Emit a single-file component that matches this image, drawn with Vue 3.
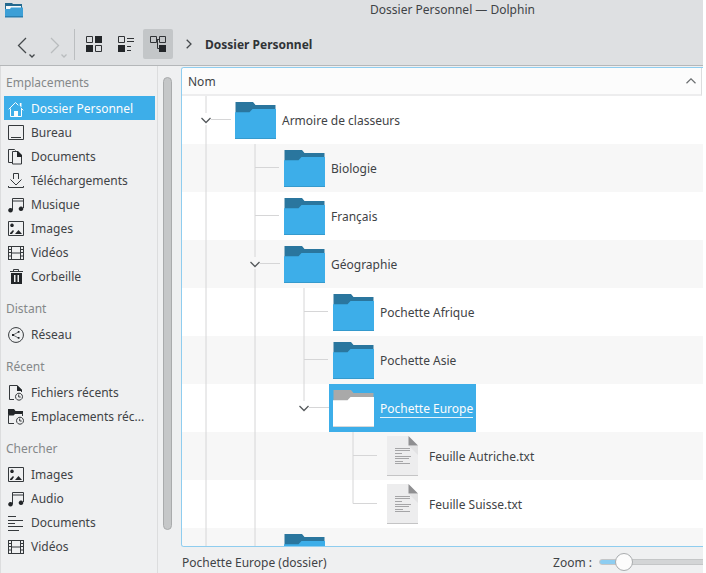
<script setup>
import { ref, computed } from 'vue'

const groups = [
  {
    title: 'Emplacements',
    items: [
      { label: 'Dossier Personnel', icon: 'home', active: true },
      { label: 'Bureau', icon: 'desktop' },
      { label: 'Documents', icon: 'documents' },
      { label: 'Téléchargements', icon: 'download' },
      { label: 'Musique', icon: 'music' },
      { label: 'Images', icon: 'image' },
      { label: 'Vidéos', icon: 'video' },
      { label: 'Corbeille', icon: 'trash' },
    ],
  },
  { title: 'Distant', items: [{ label: 'Réseau', icon: 'network' }] },
  {
    title: 'Récent',
    items: [
      { label: 'Fichiers récents', icon: 'recentFile' },
      { label: 'Emplacements réc...', icon: 'recentFolder' },
    ],
  },
  {
    title: 'Chercher',
    items: [
      { label: 'Images', icon: 'image' },
      { label: 'Audio', icon: 'music' },
      { label: 'Documents', icon: 'lines' },
      { label: 'Vidéos', icon: 'video' },
    ],
  },
]

// Each icon is a list of shapes: s = stroked path, f = filled path, t = thin stroke.
const icons = {
  home: [
    { s: 'M.7 8.300 7.500 1.500l2.800 2.800M12.800 6.800l2.500 2.500M2.500 7.500v8h11v-8' },
    { f: 'M6 10h4v5.500H6zM11.800 2h1.700v4.500l-1.700-1.700z' },
  ],
  desktop: [{ s: 'M.5.5h15v14H.5zM3 12.500h10' }],
  documents: [
    { s: 'M4 13.500H.5V.5h6l1 1M4.500 2.500h5l4 4v8.500h-9z' },
    { f: 'M9 2h1l4 4v2H9z' },
  ],
  download: [{ s: 'M5.500 6V.5h5V6M2.500 6.500 8 12l5.500-5.500M.5 13v1.500h15V13' }],
  music: [
    { s: 'M4.500 13V1.500h11V11M4.500 4h11' },
    { f: 'M2.500 11a2.300 2.300 0 1 0 .01 0zM13 9.500a2.300 2.300 0 1 0 .01 0z' },
  ],
  image: [
    { s: 'M.5.5h15v14H.5z' },
    { f: 'M4 2.500a1.800 1.800 0 1 0 .01 0zM2 13v-1l3-3 1 1-2 3zM7 13l3.500-4 3.500 4z' },
  ],
  video: [
    { s: 'M.5 1v14M15.500 1v14M3.500 1v14M12.500 1v14M1 1.500h14M3 8h10M1 14.500h14M1 4.500h2M1 7.500h2M1 11h2M13 4.500h2M13 7.500h2M13 11h2' },
  ],
  trash: [
    { s: 'M5.500 2.500v-2h5v2M2 2.500h13' },
    { f: 'M3 4h11v11H3zM6 6v7h1.500V6zM9.500 6v7H11V6z' },
  ],
  network: [
    { s: 'M8 .6a7.400 7.400 0 1 0 .01 0z' },
    { t: 'M10.500 5 5 8l5.500 3' },
    { f: 'M4 7h2v2H4zM9.800 4h1.700v1.800H9.800zM9.800 10h1.700v1.800H9.800z' },
  ],
  recentFile: [
    { s: 'M6 14.500H1.500V.5H9l4.500 4.500v2' },
    { f: 'M9 0l5 5v1H9z' },
    { s: 'M11 8.200a3.500 3.500 0 1 0 .01 0zM10.700 9.500v2.500h2' },
  ],
  recentFolder: [
    { f: 'M0 0h6l1.500 2H15v3H7L5.500 6.500H0z' },
    { s: 'M.5 5v9.500H6M14.500 4v3M12 8.200a3.500 3.500 0 1 0 .01 0zM11.700 9.500v2.500h2' },
  ],
  lines: [{ s: 'M0 1.500h8M0 5.500h15M0 8.500h7M0 11.500h15M0 15.500h11' }],
}

// guides: one entry per indentation column, left to right.
const rows = [
  { name: 'Armoire de classeurs', kind: 'folder', guides: ['open'] },
  { name: 'Biologie', kind: 'folder', guides: ['line', 'tee'] },
  { name: 'Français', kind: 'folder', guides: ['line', 'tee'] },
  { name: 'Géographie', kind: 'folder', guides: ['line', 'open'] },
  { name: 'Pochette Afrique', kind: 'folder', guides: ['line', 'line', 'tee'] },
  { name: 'Pochette Asie', kind: 'folder', guides: ['line', 'line', 'tee'] },
  { name: 'Pochette Europe', kind: 'folder', selected: true, guides: ['line', 'line', 'last-open'] },
  { name: 'Feuille Autriche.txt', kind: 'file', guides: ['line', 'line', 'none', 'tee'] },
  { name: 'Feuille Suisse.txt', kind: 'file', guides: ['line', 'line', 'none', 'elbow'] },
  { name: '', kind: 'folder', guides: ['line', 'tee'] },
]

const guidePaths = {
  none: '',
  line: 'M24 0v48',
  tee: 'M24 0v48M24 23.500H48',
  elbow: 'M24 0v23.500H48',
  open: 'M24 0v17M24 29v19M29 23.500h20',
  'last-open': 'M24 0v17M29 23.500h20',
}

const zoom = ref(10)
const fill = computed(() => ({ '--fill': `${zoom.value + 4}%` }))
</script>

<template>
  <div class="window">
    <header class="top">
      <div class="titlebar">
        <svg class="app-icon" viewBox="0 0 18 16" aria-hidden="true">
          <path d="M0 1h7l1 1h9v6H0z" fill="#23698f" />
          <path d="M1 4h15v5H1z" fill="#f4f8fa" />
          <path d="M0 7h5l1-1.500h12V15H0z" fill="#3c9fd6" />
          <path d="M0 14h18v1.500H0z" fill="#2a7fb0" />
        </svg>
        <h1>Dossier Personnel — Dolphin</h1>
      </div>
      <nav class="toolbar">
        <button class="nav-btn" aria-label="Précédent">
          <svg viewBox="0 0 24 24"><path d="M12 2 4.500 9.500 12 17" /><path class="drop" d="m15.500 18.500 2.500 2.500 2.500-2.500" /></svg>
        </button>
        <button class="nav-btn next" aria-label="Suivant" disabled>
          <svg viewBox="0 0 24 24"><path d="m5 2 7.500 7.500L5 17" /><path class="drop" d="m15.500 18.500 2.500 2.500 2.500-2.500" /></svg>
        </button>
        <span class="separator"></span>
        <button class="view-btn" aria-label="Icônes">
          <svg viewBox="0 0 16 16"><path class="solid" d="M9 0h7v7H9zM0 9h7v7H0z" /><path d="M.5.5h6v6h-6zM9.500 9.500h6v6h-6z" /></svg>
        </button>
        <button class="view-btn" aria-label="Compact">
          <svg viewBox="0 0 16 16"><path class="solid" d="M0 9h7v7H0z" /><path d="M.5.5h6v6h-6zM9 2.500h7M9 5.500h7M9 10.500h4M9 14.500h4" /></svg>
        </button>
        <button class="view-btn pressed" aria-label="Détails" aria-pressed="true">
          <svg viewBox="0 0 16 16"><path class="solid" d="M9 9h7v7H9z" /><path d="M.5.5h6v6h-6zM9.500.5h6v6h-6zM6.500 3.500h3M7.500 3.500v9H9" /></svg>
        </button>
        <svg class="crumb-arrow" viewBox="0 0 6 10" aria-hidden="true"><path d="m.7.7 4.300 4.300L.7 9.300" /></svg>
        <a class="crumb" href="#">Dossier Personnel</a>
      </nav>
    </header>

    <div class="body">
      <aside class="places">
        <section v-for="g in groups" :key="g.title">
          <h2>{{ g.title }}</h2>
          <ul>
            <li v-for="item in g.items" :key="item.label">
              <a href="#" :class="{ active: item.active }">
                <svg class="place-icon" viewBox="0 0 16 16" aria-hidden="true">
                  <path
                    v-for="(p, i) in icons[item.icon]"
                    :key="i"
                    :d="p.s || p.f || p.t"
                    :class="{ fill: p.f, thin: p.t }"
                  />
                </svg>
                <span>{{ item.label }}</span>
              </a>
            </li>
          </ul>
        </section>
      </aside>
      <div class="scroll"><div class="thumb"></div></div>

      <main class="content">
        <div class="view">
          <button class="column-head">
            <span>Nom</span>
            <svg viewBox="0 0 10 6" aria-hidden="true"><path d="M.5 5.200 5 .8l4.500 4.400" /></svg>
          </button>
          <div class="tree" role="tree">
            <div
              v-for="(row, r) in rows"
              :key="r"
              class="row"
              role="treeitem"
              :aria-level="row.guides.length"
              :aria-selected="!!row.selected"
            >
              <svg v-for="(g, i) in row.guides" :key="i" class="guide" viewBox="0 0 49 48" aria-hidden="true">
                <path :d="guidePaths[g]" />
                <path v-if="g.endsWith('open')" class="chevron" d="m19.500 22 4.500 4.500 4.500-4.500" />
              </svg>
              <div class="entry" :class="{ selected: row.selected }">
                <svg v-if="row.kind === 'folder'" class="folder" viewBox="0 0 41 37" aria-hidden="true">
                  <path class="back" d="M.5 0H18l2.500 3H40.500v8H.5z" />
                  <path class="front" d="M0 10.300h14.500L17.500 7H41v30H0z" />
                  <path class="edge" d="M0 36.500h41" />
                </svg>
                <svg v-else class="file" viewBox="0 0 41 40" aria-hidden="true">
                  <path d="M5 0h21l10 10v30H5z" fill="#ededee" />
                  <path d="m27 10 9 9v-9z" fill="#e2e2e3" />
                  <path d="M26.500 0 36 9.500h-9.500z" fill="#8f8f91" />
                  <path d="M5 39.500h31" stroke="#c4c4c5" />
                  <path d="M13 12.500h15M13 14.500h15M13 17.500h7M13 20.500h16M13 22.500h14M13 25.500h8M13 27.500h15" stroke="#a5a5a7" />
                </svg>
                <span class="name"><span>{{ row.name }}</span></span>
              </div>
            </div>
          </div>
        </div>
        <footer class="status">
          <span class="summary">Pochette Europe (dossier)</span>
          <label for="zoom">Zoom :</label>
          <div class="slider"><input id="zoom" v-model.number="zoom" type="range" min="0" max="100" :style="fill" /></div>
        </footer>
      </main>
    </div>
  </div>
</template>

<style>
body {
  margin: 0;
  background: #fff;
}
</style>

<style scoped>
* {
  box-sizing: border-box;
}
.window {
  display: flex;
  flex-direction: column;
  height: 100vh;
  padding-right: 3px;
  font: 12px/20px "Noto Sans", sans-serif;
  color: #3f4346;
}
button {
  padding: 0;
  border: 0;
  background: none;
  font: inherit;
  color: inherit;
}
a {
  color: inherit;
  text-decoration: none;
}
svg {
  display: block;
  flex: none;
  fill: none;
}
.top {
  flex: none;
  height: 66px;
  background: #dee0e2;
  border-bottom: 1px solid #b4b7b9;
}
.titlebar {
  display: grid;
  grid-template-columns: 197px 1fr;
  align-items: center;
  height: 20px;
  padding-left: 5px;
}
.app-icon {
  width: 18px;
  height: 16px;
}
h1 {
  margin: 0;
  font: inherit;
  text-align: center;
}
.toolbar {
  display: flex;
  align-items: center;
  height: 48px;
  padding-left: 14px;
}
.nav-btn {
  width: 32px;
  height: 32px;
}
.nav-btn svg {
  width: 24px;
  height: 24px;
  margin-top: 8px;
  stroke: #45494c;
  stroke-width: 1.3;
}
.nav-btn.next svg {
  stroke: #b9bcbe;
}
.separator {
  width: 1px;
  height: 31px;
  margin: 0 4px 0 -4px;
  background: #bbbec0;
}
.view-btn {
  display: grid;
  place-items: center;
  width: 30px;
  height: 30px;
  margin-right: 2px;
  border-radius: 2px;
}
.view-btn svg {
  width: 16px;
  height: 16px;
  stroke: #303336;
}
.view-btn .solid {
  fill: #232629;
  stroke: none;
}
.pressed {
  background: #c3c6c8;
}
.crumb-arrow {
  width: 6px;
  height: 10px;
  margin: 0 13px 0 11px;
  stroke: #45494c;
  stroke-width: 1.3;
}
.crumb {
  padding-top: 2px;
  font-weight: 700;
  color: #303336;
}
.body {
  display: flex;
  flex: 1;
  min-height: 0;
  background: #eff0f1;
}
.places {
  flex: none;
  width: 158px;
  padding: 2px 2px 0 3px;
  border-left: 1px solid #dcddde;
  border-right: 1px solid #dcddde;
  overflow: hidden;
}
h2 {
  margin: 6px 0 0;
  padding: 5px 2px 3px;
  font: inherit;
  color: #85888a;
}
section:first-child h2 {
  margin-top: 0;
}
ul {
  margin: 0;
  padding: 0;
  list-style: none;
}
.places a {
  display: flex;
  align-items: center;
  gap: 7px;
  height: 24px;
  padding: 1px 4px 0;
}
.places a span {
  padding-top: 1px;
  white-space: nowrap;
}
.place-icon {
  width: 16px;
  height: 16px;
  stroke: #35393c;
}
.place-icon .fill {
  fill: #232629;
  fill-rule: evenodd;
  stroke: none;
}
.place-icon .thin {
  stroke-width: 0.7;
}
.places .active {
  background: #3daee9;
  color: #fcfcfc;
}
.active .place-icon {
  stroke: #fcfcfc;
}
.active .place-icon .fill {
  fill: #fcfcfc;
}
.scroll {
  flex: none;
  width: 23px;
  padding: 11px 0 43px 5px;
}
.thumb {
  width: 9px;
  height: 100%;
  border: 1px solid #a9abac;
  border-radius: 5px;
  background: #c5c7c8;
}
.content {
  display: flex;
  flex: 1;
  flex-direction: column;
  min-width: 0;
  padding-top: 1px;
}
.view {
  display: flex;
  flex: 1;
  flex-direction: column;
  min-height: 0;
  border: 1px solid #8fcdef;
  border-right: 0;
  border-radius: 3px 0 0 3px;
  background: #fff;
  overflow: hidden;
}
.column-head {
  display: flex;
  flex: none;
  align-items: center;
  justify-content: space-between;
  height: 28px;
  margin-right: 1px;
  padding: 0 5px 0 6px;
  border-right: 1px solid #dcddde;
  border-bottom: 2px solid #ededee;
  background: #fcfcfc;
}
.column-head span {
  padding-top: 2px;
}
.column-head svg {
  width: 10px;
  height: 6px;
  stroke: #6c6f71;
  stroke-width: 1.2;
}
.tree {
  flex: 1;
  min-height: 0;
  overflow: hidden;
}
.row {
  display: flex;
  height: 48px;
}
.row:nth-child(even) {
  background: #f7f7f7;
}
.guide {
  width: 49px;
  height: 48px;
  stroke: #d6d6d7;
}
.guide .chevron {
  stroke: #55595c;
  stroke-width: 1.3;
}
.entry {
  display: flex;
  align-items: center;
  gap: 6px;
  padding: 0 3px 0 4px;
}
.name {
  padding-top: 2px;
}
.entry.selected {
  background: #3daee9;
  color: #fcfcfc;
}
.selected .name span {
  border-bottom: 1px solid #e4f3fb;
}
.folder {
  width: 41px;
  height: 37px;
}
.folder .back {
  fill: #2a769e;
}
.folder .front {
  fill: #3daee9;
}
.folder .edge {
  stroke: #359acd;
}
.selected .folder .back {
  fill: #a9a9a9;
}
.selected .folder .front {
  fill: #fff;
}
.selected .folder .edge {
  stroke: #d5d9db;
}
.file {
  width: 41px;
  height: 40px;
}
.status {
  display: flex;
  flex: none;
  align-items: center;
  height: 26px;
  padding: 4px 0 0 1px;
}
.summary {
  flex: 1;
}
.summary,
.status label {
  padding-top: 2px;
}
.slider {
  flex: none;
  width: 104px;
  height: 20px;
  margin-left: 7px;
  overflow: hidden;
}
.slider input {
  display: block;
  width: 170px;
  height: 20px;
  margin: 0;
  appearance: none;
  background: none;
}
.slider input::-webkit-slider-runnable-track {
  height: 6px;
  border: 1px solid #c4c6c7;
  border-radius: 3px;
  background: linear-gradient(to right, #8dcdf1 var(--fill), #d3d5d6 var(--fill));
}
.slider input::-webkit-slider-thumb {
  width: 18px;
  height: 18px;
  margin-top: -7px;
  appearance: none;
  border: 1px solid #a9acae;
  border-radius: 50%;
  background: #fcfcfc;
}
</style>
